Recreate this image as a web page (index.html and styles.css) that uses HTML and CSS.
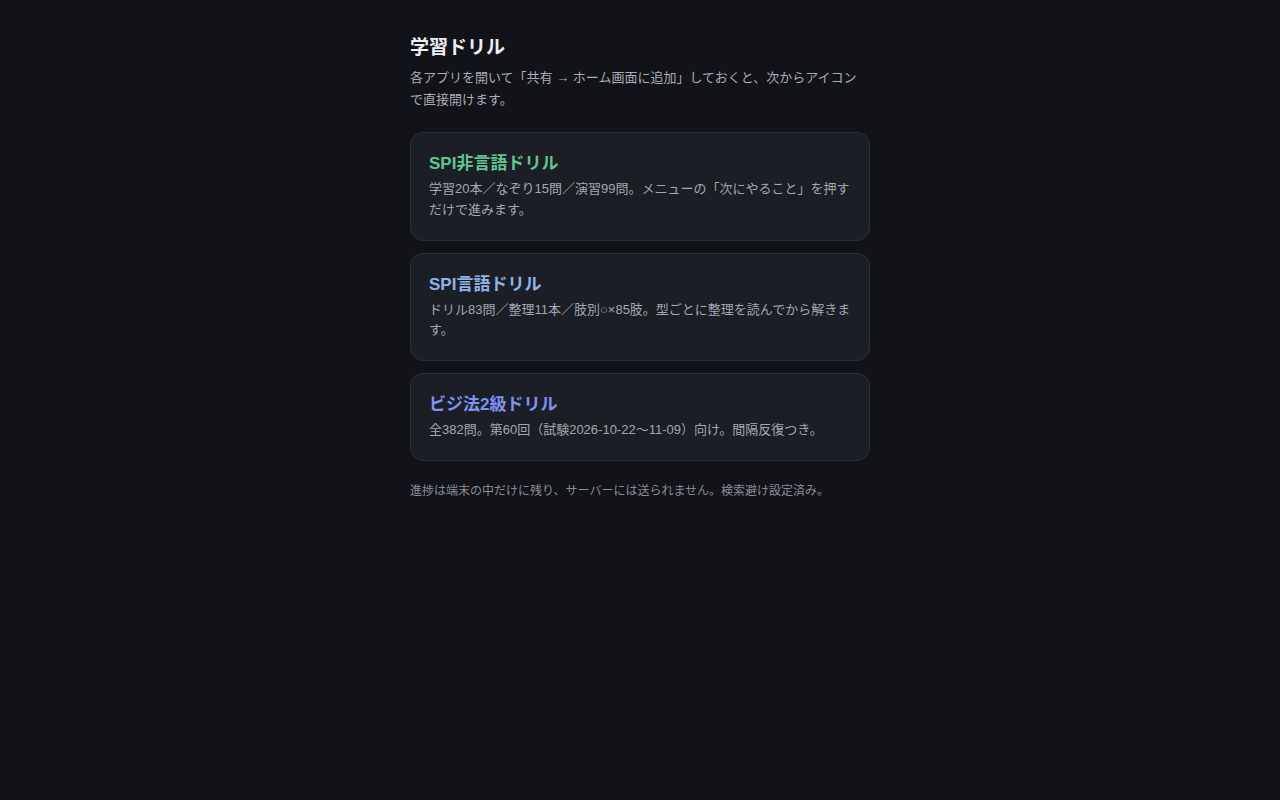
FILE: index.html
```html
<!DOCTYPE html>
<html lang="ja">
<head>
<meta charset="utf-8">
<title>学習ドリル</title>
<link rel="stylesheet" href="styles.css">
</head>
<body>
<main class="wrap">
  <h1 class="title">学習ドリル</h1>
  <p class="lead">各アプリを開いて「共有 → ホーム画面に追加」しておくと、次からアイコンで直接開けます。</p>
  <div class="cards">
    <a class="card">
      <h2 class="card-title green">SPI非言語ドリル</h2>
      <p class="card-desc">学習20本／なぞり15問／演習99問。メニューの「次にやること」を押すだけで進みます。</p>
    </a>
    <a class="card">
      <h2 class="card-title blue">SPI言語ドリル</h2>
      <p class="card-desc">ドリル83問／整理11本／肢別○×85肢。型ごとに整理を読んでから解きます。</p>
    </a>
    <a class="card">
      <h2 class="card-title violet">ビジ法2級ドリル</h2>
      <p class="card-desc">全382問。第60回（試験2026-10-22〜11-09）向け。間隔反復つき。</p>
    </a>
  </div>
  <p class="foot">進捗は端末の中だけに残り、サーバーには送られません。検索避け設定済み。</p>
</main>
</body>
</html>
```
FILE: styles.css
```css
html, body {
  margin: 0;
  padding: 0;
  background: #121319;
}
body {
  font-family: "Liberation Sans", "Noto Sans CJK JP", sans-serif;
  color: #e6e8ec;
}
.wrap {
  width: 460px;
  margin: 0 auto;
  padding-top: 34px;
}
.title {
  margin: 0;
  font-size: 19px;
  line-height: 28px;
  font-weight: 700;
  color: #eceef2;
}
.lead {
  margin: 5px 0 0;
  padding-right: 3px;
  font-size: 13px;
  line-height: 22px;
  color: #a9adb6;
}
.cards {
  margin-top: 21px;
  display: flex;
  flex-direction: column;
  gap: 12px;
}
.card {
  display: block;
  background: #1b1e25;
  border: 1px solid #2b2f38;
  border-radius: 13px;
  padding: 17px 18px 19px;
}
.card-title {
  margin: 0;
  font-size: 17px;
  line-height: 28px;
  font-weight: 700;
}
.green { color: #62c58f; }
.blue { color: #8fb3e6; }
.violet { color: #7f91f2; }
.card-desc {
  margin: 1px 0 0;
  font-size: 13px;
  line-height: 1.6;
  color: #a3a7b0;
}
.foot {
  margin: 20px 0 0;
  font-size: 12px;
  line-height: 20px;
  color: #8a8e98;
}
```
